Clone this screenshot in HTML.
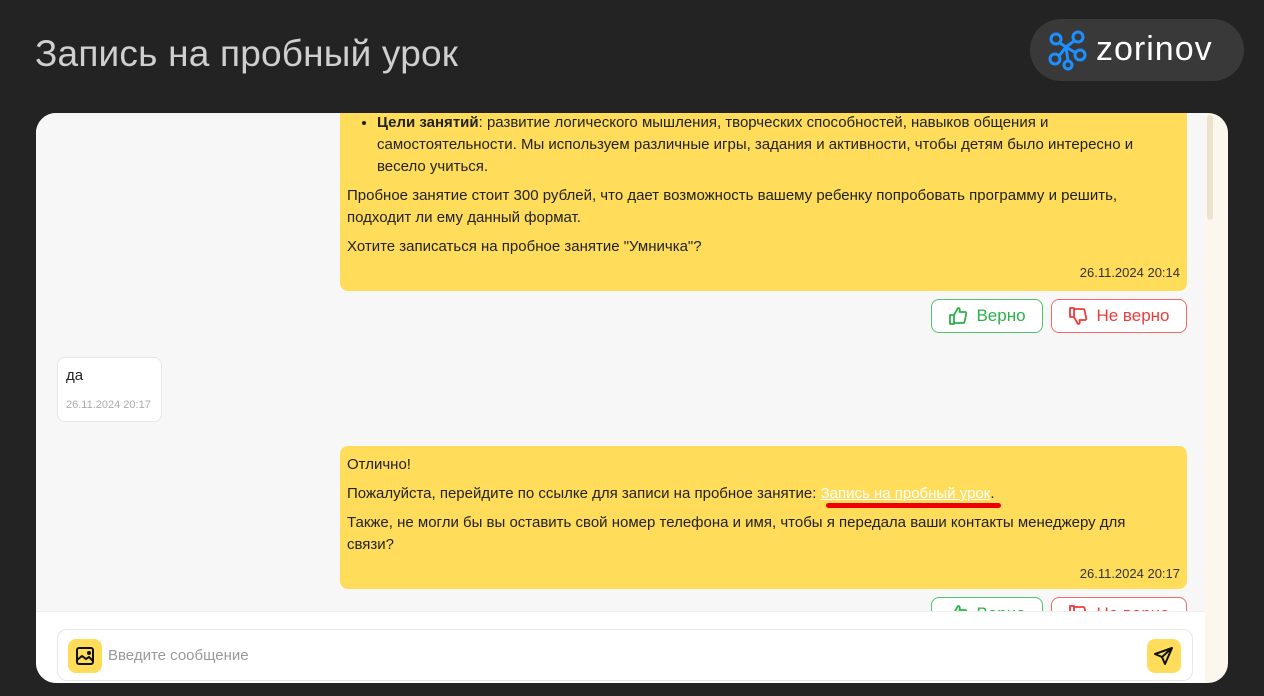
<!DOCTYPE html><html><head><meta charset="utf-8"><style>
*{box-sizing:border-box;margin:0;padding:0}
body{width:1264px;height:696px;background:#232323;font-family:"Liberation Sans",sans-serif;position:relative;overflow:hidden}
h1{position:absolute;left:35px;top:33px;font-size:37px;font-weight:400;color:#cfcfcf;letter-spacing:0.2px}
.logo{position:absolute;left:1030px;top:19px;width:214px;height:62px;background:#393939;border-radius:31px}
.logo span{position:absolute;left:66px;top:11px;font-size:34px;color:#fff;letter-spacing:1px}
.card{position:absolute;left:36px;top:113px;width:1192px;height:570px;background:#fcf7ee;border-radius:20px;overflow:hidden}
.chat{position:absolute;left:0;top:0;width:1169px;height:498px;background:#f7f7f7;overflow:hidden}
.thumb{position:absolute;left:1171px;top:2px;width:6px;height:105px;background:#ece3cf;border-radius:3px}
.bub{position:absolute;left:304px;width:847px;background:#ffdc5a;border-radius:8px;font-size:15px;line-height:22px;color:#222;padding:0 7px}
.bub p{margin-bottom:7px}
.ts{position:absolute;right:7px;font-size:13px;color:#333}
.btn{position:absolute;height:34px;border-radius:8px;background:#fff;font-size:17px;line-height:32px;display:flex;align-items:center;justify-content:center;gap:8px}
.ok{border:1px solid #52c46a;color:#29b24a;width:112px;left:895px}
.no{border:1px solid #f06b6b;color:#ee3b3b;width:136px;left:1015px}
.user{position:absolute;left:21px;top:244px;width:105px;height:65px;background:#fff;border:1px solid #e6e6e6;border-radius:8px}
.inp{position:absolute;left:0;top:498px;width:1169px;height:72px;background:#fff;border-top:1px solid #eee}
.box{position:absolute;left:21px;top:17px;width:1136px;height:52px;border:1px solid #e8e8e8;border-radius:10px}
.ic{position:absolute;top:9px;width:34px;height:34px;background:#ffdc5a;border-radius:8px}
</style></head><body>
<h1>Запись на пробный урок</h1>
<div class="logo"><svg style="position:absolute;left:16px;top:10px" width="42" height="42" viewBox="0 0 42 42" fill="none" stroke="#1e8fff" stroke-width="3"><circle cx="10" cy="10" r="5"/><circle cx="32" cy="8" r="5"/><circle cx="34" cy="26" r="5"/><circle cx="9" cy="30" r="5"/><circle cx="22" cy="36" r="4"/><path d="M14 14L20 18 28 12M20 18L30 24M20 18L13 27M20 18L22 32"/></svg><span>zorinov</span></div>
<div class="card">
<div class="chat">
<div class="bub" style="top:-10px;height:188px">
<ul style="margin-left:30px;padding-top:9px;margin-bottom:7px;padding-right:20px"><li><b>Цели занятий</b>: развитие логического мышления, творческих способностей, навыков общения и самостоятельности. Мы используем различные игры, задания и активности, чтобы детям было интересно и весело учиться.</li></ul>
<p>Пробное занятие стоит 300 рублей, что дает возможность вашему ребенку попробовать программу и решить, подходит ли ему данный формат.</p>
<p>Хотите записаться на пробное занятие "Умничка"?</p>
<div class="ts" style="top:159px">26.11.2024 20:14</div></div>
<div class="btn ok" style="top:186px"><svg width="20" height="20" viewBox="0 0 20 20" fill="none" stroke="#29b24a" stroke-width="1.8" stroke-linejoin="round"><path d="M2 9h4v9H2zM6 9l4-7c2 0 2 2 1.5 4H17c1 0 1.5 1 1.2 2l-1.7 8c-.2.8-.8 1-1.5 1H6"/></svg>Верно</div>
<div class="btn no" style="top:186px"><svg width="20" height="20" viewBox="0 0 20 20" fill="none" stroke="#ee3b3b" stroke-width="1.8" stroke-linejoin="round"><path d="M2 2h4v9H2zM6 11l4 7c2 0 2-2 1.5-4H17c1 0 1.5-1 1.2-2l-1.7-8c-.2-.8-.8-1-1.5-1H6"/></svg>Не верно</div>
<div class="user"><div style="position:absolute;left:8px;top:9px;font-size:15px;color:#222">да</div><div style="position:absolute;left:8px;top:41px;font-size:11px;color:#aaa">26.11.2024 20:17</div></div>
<div class="bub" style="top:333px;height:143px;padding-top:8px;padding-right:40px">
<p>Отлично!</p>
<p>Пожалуйста, перейдите по ссылке для записи на пробное занятие: <u style="color:#fff">Запись на пробный урок</u>.</p>
<p>Также, не могли бы вы оставить свой номер телефона и имя, чтобы я передала ваши контакты менеджеру для связи?</p>
<div class="ts" style="top:117px">26.11.2024 20:17</div>
<div style="position:absolute;left:486px;top:57px;width:175px;height:5px;background:#e00;border-radius:3px"></div></div>
<div class="btn ok" style="top:484px"><svg width="20" height="20" viewBox="0 0 20 20" fill="none" stroke="#29b24a" stroke-width="1.8"><path d="M2 9h4v9H2zM6 9l4-7c2 0 2 2 1.5 4H17c1 0 1.5 1 1.2 2l-1.7 8c-.2.8-.8 1-1.5 1H6"/></svg>Верно</div>
<div class="btn no" style="top:484px"><svg width="20" height="20" viewBox="0 0 20 20" fill="none" stroke="#ee3b3b" stroke-width="1.8"><path d="M2 2h4v9H2zM6 11l4 7c2 0 2-2 1.5-4H17c1 0 1.5-1 1.2-2l-1.7-8c-.2-.8-.8-1-1.5-1H6"/></svg>Не верно</div>
</div>
<div class="thumb"></div>
<div class="inp"><div class="box">
<div class="ic" style="left:10px"><svg width="34" height="34" viewBox="0 0 34 34" fill="none" stroke="#111" stroke-width="2"><rect x="9" y="9" width="16" height="16" rx="2"/><path d="M9 21l5-4 4 3 3-2 4 4"/><circle cx="21" cy="14" r="1"/></svg></div>
<div style="position:absolute;left:50px;top:17px;font-size:15px;color:#999">Введите сообщение</div>
<div class="ic" style="left:1089px"><svg width="34" height="34" viewBox="0 0 34 34" fill="none" stroke="#111" stroke-width="2" stroke-linejoin="round"><path d="M25 9L8 15l7 3 3 7z M15 18l10-9"/></svg></div>
</div></div>
</div>
</body></html>
